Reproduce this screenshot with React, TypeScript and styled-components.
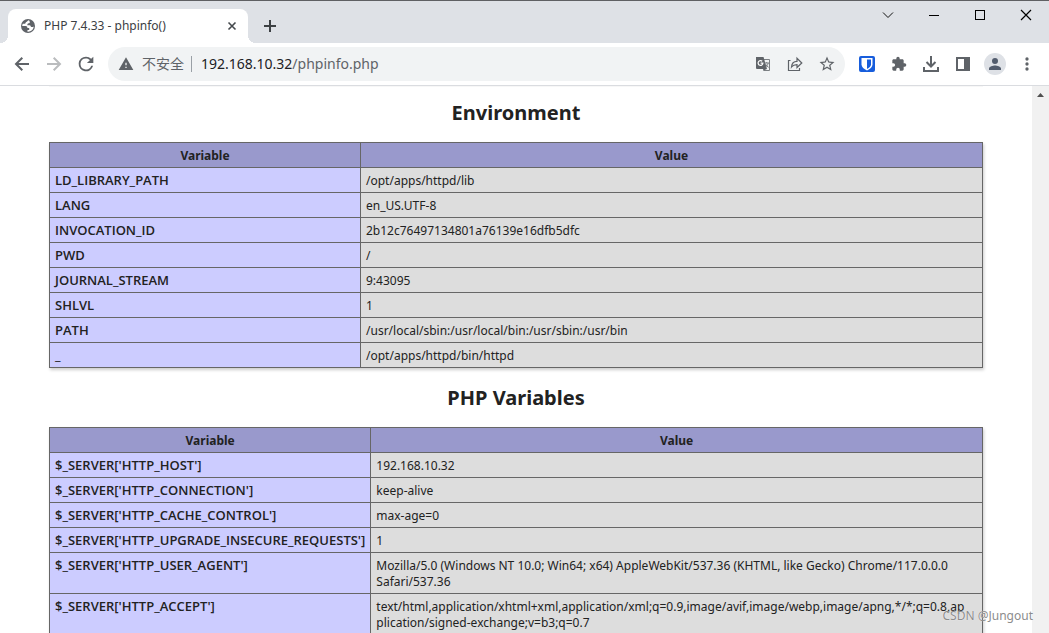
import React from "react";
import styled, { createGlobalStyle } from "styled-components";

const uiFont = `"Noto Sans", "Noto Sans CJK SC", sans-serif`;
const strongFont = `"Open Sans", "Noto Sans CJK SC", sans-serif`;

const GlobalStyle = createGlobalStyle`
  * { box-sizing: border-box; }
  html, body { margin: 0; }
  body { background: #fff; color: #222; font-family: ${uiFont}; }
`;

const Window = styled.div`
  position: relative;
  display: flex;
  flex-direction: column;
  height: 100vh;
  overflow: hidden;
  border-top: 1px solid #5f6063;
`;

const TabStrip = styled.header`
  display: flex;
  align-items: flex-start;
  flex: none;
  height: 42px;
  padding-left: 8px;
  background: #dee1e6;
`;

const Tab = styled.div`
  position: relative;
  display: flex;
  align-items: center;
  width: 240px;
  height: 34px;
  margin-top: 8px;
  padding: 0 8px 0 12px;
  border-radius: 8px 8px 0 0;
  background: #fff;
  color: #5f6368;
  font: 12px/18px ${uiFont};
  &::before, &::after {
    content: "";
    position: absolute;
    bottom: 0;
    width: 8px;
    height: 8px;
  }
  &::before { right: 100%; background: radial-gradient(circle at 0 0, transparent 8px, #fff 8px); }
  &::after { left: 100%; background: radial-gradient(circle at 100% 0, transparent 8px, #fff 8px); }
`;

const TabTitle = styled.span`
  flex: 1;
  margin-left: 8px;
  color: #3c4043;
  white-space: nowrap;
`;

const IconButton = styled.button<{ $w?: number; $h?: number; $color?: string }>`
  display: flex;
  align-items: center;
  justify-content: center;
  flex: none;
  width: ${(p) => p.$w ?? 32}px;
  height: ${(p) => p.$h ?? 32}px;
  padding: 0;
  border: 0;
  background: none;
  color: ${(p) => p.$color ?? "#5f6368"};
  svg { display: block; }
`;

const NewTab = styled(IconButton)`
  margin: 9px 0 0 6px;
`;

const WindowControls = styled.div`
  display: flex;
  margin-left: auto;
`;

const Toolbar = styled.nav`
  display: flex;
  align-items: center;
  flex: none;
  height: 43px;
  padding: 0 6px;
  border-bottom: 1px solid #dadce0;
  background: #fff;
`;

const AddressBar = styled.div`
  display: flex;
  align-items: center;
  flex: 1;
  min-width: 0;
  height: 34px;
  margin: 0 6px;
  padding: 0 2px 0 10px;
  border-radius: 17px;
  background: #f1f3f4;
  color: #5f6368;
  font: 14px/20px ${uiFont};
`;

const Security = styled.span`
  margin-left: 8px;
  padding-right: 7px;
  border-right: 1px solid #9aa0a6;
  line-height: 16px;
  white-space: nowrap;
`;

const Url = styled.div`
  flex: 1;
  min-width: 0;
  margin-left: 9px;
  white-space: nowrap;
  overflow: hidden;
  b { font-weight: 400; color: #202124; }
`;

const Avatar = styled.span`
  display: flex;
  align-items: center;
  justify-content: center;
  width: 22px;
  height: 22px;
  border-radius: 50%;
  background: #dee1e6;
  color: #525c6d;
`;

const Viewport = styled.div`
  display: flex;
  flex: 1;
  min-height: 0;
`;

const Page = styled.main`
  flex: 1;
  min-width: 0;
  overflow: hidden;
`;

const Scrollbar = styled.div`
  display: flex;
  justify-content: center;
  flex: none;
  width: 17px;
  padding-top: 7px;
  background: #f1f1f1;
`;

const Content = styled.div`
  max-width: 934px;
  margin: 0 auto;
  section + section { margin-top: 4px; }
`;

const Rule = styled.hr`
  height: 1px;
  margin: 0;
  border: 0;
  background: #f7f7f7;
`;

const Heading = styled.h2`
  margin: 0;
  padding: 11px 0 14px;
  font-size: 20px;
  line-height: 30px;
  font-weight: 700;
  text-align: center;
`;

const InfoTable = styled.table`
  width: 100%;
  border-collapse: collapse;
  box-shadow: 1px 2px 3px #ccc;
  font-size: 12px;
  line-height: 16px;
  th, td {
    padding: 5px 5px 3px;
    border: 1px solid #666;
    vertical-align: top;
  }
  thead th { background: #99c; text-align: center; }
  tbody th { padding: 4px 5px; }
`;

const Name = styled.th<{ $w: number }>`
  width: ${(p) => p.$w}px;
  background: #ccf;
  font-family: ${strongFont};
  font-size: 13px;
  font-weight: 600;
  text-align: left;
  white-space: nowrap;
`;

const Value = styled.td`
  background: #ddd;
  overflow-wrap: anywhere;
`;

const Watermark = styled.div`
  position: absolute;
  right: 16px;
  bottom: 8px;
  color: #8c8c8c;
  font: 12px/18px ${uiFont};
  text-shadow: 0 0 1px #fff;
`;

type Row = [string, React.ReactNode];

const environment: Row[] = [
  ["LD_LIBRARY_PATH", "/opt/apps/httpd/lib"],
  ["LANG", "en_US.UTF-8"],
  ["INVOCATION_ID", "2b12c76497134801a76139e16dfb5dfc"],
  ["PWD", "/"],
  ["JOURNAL_STREAM", "9:43095"],
  ["SHLVL", "1"],
  ["PATH", "/usr/local/sbin:/usr/local/bin:/usr/sbin:/usr/bin"],
  ["_", "/opt/apps/httpd/bin/httpd"],
];

const variables: Row[] = [
  ["$_SERVER['HTTP_HOST']", "192.168.10.32"],
  ["$_SERVER['HTTP_CONNECTION']", "keep-alive"],
  ["$_SERVER['HTTP_CACHE_CONTROL']", "max-age=0"],
  ["$_SERVER['HTTP_UPGRADE_INSECURE_REQUESTS']", "1"],
  ["$_SERVER['HTTP_USER_AGENT']", "Mozilla/5.0 (Windows NT 10.0; Win64; x64) AppleWebKit/537.36 (KHTML, like Gecko) Chrome/117.0.0.0 Safari/537.36"],
  [
    "$_SERVER['HTTP_ACCEPT']",
    <>text/html,application/xhtml+xml,application/xml;q=0.9,image/avif,image/webp,image/apng,*/*;q=0.8,ap<wbr />plication/signed-exchange;v=b3;q=0.7</>,
  ],
];

function Section({ title, rows, nameWidth }: { title: string; rows: Row[]; nameWidth: number }) {
  return (
    <section>
      <Heading>{title}</Heading>
      <InfoTable>
        <thead>
          <tr><th scope="col">Variable</th><th scope="col">Value</th></tr>
        </thead>
        <tbody>
          {rows.map(([k, v]) => (
            <tr key={k}><Name scope="row" $w={nameWidth}>{k}</Name><Value>{v}</Value></tr>
          ))}
        </tbody>
      </InfoTable>
    </section>
  );
}

function Glyph({ d, size = 20 }: { d: string; size?: number }) {
  return <svg width={size} height={size} viewBox="0 0 24 24" fill="currentColor" aria-hidden="true"><path d={d} /></svg>;
}

const icons = {
  reload: "M17.65 6.35A7.96 7.96 0 0 0 12 4a8 8 0 1 0 7.73 10h-2.08A6 6 0 1 1 12 6c1.66 0 3.14.69 4.22 1.78L13 11h7V4z",
  warning: "M1 21h22L12 2 1 21zm12-3h-2v-2h2v2zm0-4h-2v-4h2v4z",
  star: "M22 9.240l-7.190-.620L12 2 9.190 8.630 2 9.240l5.460 4.730L5.820 21 12 17.270 18.180 21l-1.630-7.030L22 9.240zM12 15.400l-3.760 2.270 1-4.280-3.320-2.880 4.380-.380L12 6.100l1.710 4.040 4.380.380-3.320 2.880 1 4.280L12 15.400z",
  puzzle: "M20.500 11H19V7c0-1.100-.9-2-2-2h-4V3.500a2.500 2.500 0 0 0-5 0V5H4c-1.100 0-2 .9-2 2v3.800h1.500a2.700 2.700 0 0 1 0 5.400H2V20c0 1.100.9 2 2 2h3.800v-1.500a2.700 2.700 0 0 1 5.400 0V22H17c1.100 0 2-.9 2-2v-4h1.500a2.500 2.500 0 0 0 0-5z",
  person: "M12 12a4 4 0 1 0 0-8 4 4 0 0 0 0 8zm0 2c-2.670 0-8 1.340-8 4v2h16v-2c0-2.660-5.330-4-8-4z",
  more: "M12 8a2 2 0 1 0 0-4 2 2 0 0 0 0 4zm0 2a2 2 0 1 0 0 4 2 2 0 0 0 0-4zm0 6a2 2 0 1 0 0 4 2 2 0 0 0 0-4z",
};

function Line({ d, w = 16, sw = 1, crisp }: { d: string; w?: number; sw?: number; crisp?: boolean }) {
  return (
    <svg width={w} height={w} viewBox={`0 0 ${w} ${w}`} fill="none" stroke="currentColor" strokeWidth={sw} shapeRendering={crisp ? "crispEdges" : undefined} aria-hidden="true">
      <path d={d} />
    </svg>
  );
}

function GlobeIcon() {
  return (
    <svg width="16" height="16" viewBox="0 0 16 16" aria-hidden="true">
      <circle cx="8" cy="8" r="7" fill="#5f6368" />
      <path d="M9 2.300c-1.400 0-1.500 1.500-2.600 1.700-1 .2-.6 1.700-1.600 1.700H2.800C2.400 6.400 2.200 7.200 2.200 8h3.300c1.600 0 1.900.8 1.900 1.900h1.800v2H7.500v1.800c3.200.3 6.100-2.200 6.200-5.200-.9.500-1.500.8-2.400.4-1-.5-.5-1.600-1.700-1.600H7.400c-.5-1.900 1.200-2 2.300-2.300.3-1.200-.1-1.800-.7-2.700z" fill="#fff" />
    </svg>
  );
}

function TranslateIcon() {
  return (
    <svg width="16" height="16" viewBox="0 0 16 16" aria-hidden="true">
      <path d="M7 3.500h7.500v11H8.500" fill="#f1f3f4" stroke="#7b7f83" />
      <path d="M1 1h7.500L12 13H2a1 1 0 0 1-1-1z" fill="#5f6368" />
      <path d="M7.200 5.300A2.400 2.400 0 1 0 7.900 7.200H5.600" fill="none" stroke="#fff" strokeWidth="1.200" />
      <path d="M9.500 7h4.500M11.700 6v1M13.200 7c-.3 1.700-1.300 3-2.700 4M10.500 8c.8 1.600 1.800 2.600 3.200 3.300" fill="none" stroke="#7b7f83" />
      <path d="M8.500 14.500L12 13H8z" fill="#5f6368" />
    </svg>
  );
}

function ShieldIcon() {
  return (
    <svg width="16" height="16" viewBox="0 0 16 16" aria-hidden="true">
      <rect width="16" height="16" rx="2" fill="#175ddc" />
      <path d="M2.500 2h11v6.500c0 2.600-2.500 4.500-5.500 6-3-1.500-5.500-3.400-5.500-6z" fill="#fff" />
      <path d="M8 3.500h4v5c0 1.700-1.800 3.200-4 4.400z" fill="#175ddc" />
    </svg>
  );
}

export default function App() {
  return (
    <>
      <GlobalStyle />
      <Window>
        <TabStrip>
          <Tab>
            <GlobeIcon />
            <TabTitle>PHP 7.4.33 - phpinfo()</TabTitle>
            <IconButton $w={16} $h={16} aria-label="Close tab" $color="#45494d"><Line d="M4.500 4.500l7 7M11.500 4.500l-7 7" sw={1.6} /></IconButton>
          </Tab>
          <NewTab aria-label="New tab" $color="#3c4043"><Line d="M8 2v12M2 8h12" sw={2} /></NewTab>
          <WindowControls>
            <IconButton $w={46} $h={28} $color="#111" aria-label="Search tabs"><Line d="M3 5.500l5 5 5-5" /></IconButton>
            <IconButton $w={46} $h={28} $color="#000" aria-label="Minimize"><Line d="M3 8.500h10" crisp /></IconButton>
            <IconButton $w={46} $h={28} $color="#000" aria-label="Maximize"><Line d="M3.500 3.500h9v9h-9z" crisp /></IconButton>
            <IconButton $w={46} $h={28} $color="#000" aria-label="Close"><Line d="M3 3l10 10M13 3l-10 10" sw={1.2} /></IconButton>
          </WindowControls>
        </TabStrip>
        <Toolbar>
          <IconButton aria-label="Back"><Line d="M15 8H2.500M8.300 1.700L2 8l6.300 6.300" sw={2} /></IconButton>
          <IconButton aria-label="Forward" $color="#babcbe"><Line d="M1 8h12.500M7.700 1.700L14 8l-6.300 6.300" sw={2} /></IconButton>
          <IconButton aria-label="Reload"><Glyph d={icons.reload} size={22} /></IconButton>
          <AddressBar>
            <Glyph d={icons.warning} size={16} />
            <Security>不安全</Security>
            <Url><b>192.168.10.32</b>/phpinfo.php</Url>
            <IconButton aria-label="Translate"><TranslateIcon /></IconButton>
            <IconButton aria-label="Share"><Line d="M3.500 4.500h-2v10h11V12M4.500 11c.3-4 2.300-5.700 5.500-5.700V2.300L14.800 7 10 11.500V8.600C7.500 8.600 5.800 9.300 4.500 11z" sw={1.2} /></IconButton>
            <IconButton aria-label="Bookmark"><Glyph d={icons.star} size={18} /></IconButton>
          </AddressBar>
          <IconButton aria-label="Password manager"><ShieldIcon /></IconButton>
          <IconButton aria-label="Extensions"><Glyph d={icons.puzzle} size={16} /></IconButton>
          <IconButton aria-label="Downloads"><Line d="M8 0v10M3.500 6L8 10.500 12.500 6M1 11v4h14v-4" sw={2} /></IconButton>
          <IconButton aria-label="Side panel">
            <svg width="16" height="16" viewBox="0 0 16 16" aria-hidden="true"><path d="M1 1h14v14H1zM3 3v10h6V3z" fill="currentColor" fillRule="evenodd" /></svg>
          </IconButton>
          <IconButton aria-label="Profile"><Avatar><Glyph d={icons.person} size={18} /></Avatar></IconButton>
          <IconButton aria-label="Menu"><Glyph d={icons.more} size={20} /></IconButton>
        </Toolbar>
        <Viewport>
          <Page>
            <Content>
              <Rule />
              <Section title="Environment" rows={environment} nameWidth={311} />
              <Section title="PHP Variables" rows={variables} nameWidth={320} />
            </Content>
          </Page>
          <Scrollbar>
            <svg width="7" height="4" viewBox="0 0 7 4" aria-hidden="true"><path d="M0 4L3.500 0 7 4z" fill="#505050" /></svg>
          </Scrollbar>
        </Viewport>
        <Watermark>CSDN @Jungout</Watermark>
      </Window>
    </>
  );
}
